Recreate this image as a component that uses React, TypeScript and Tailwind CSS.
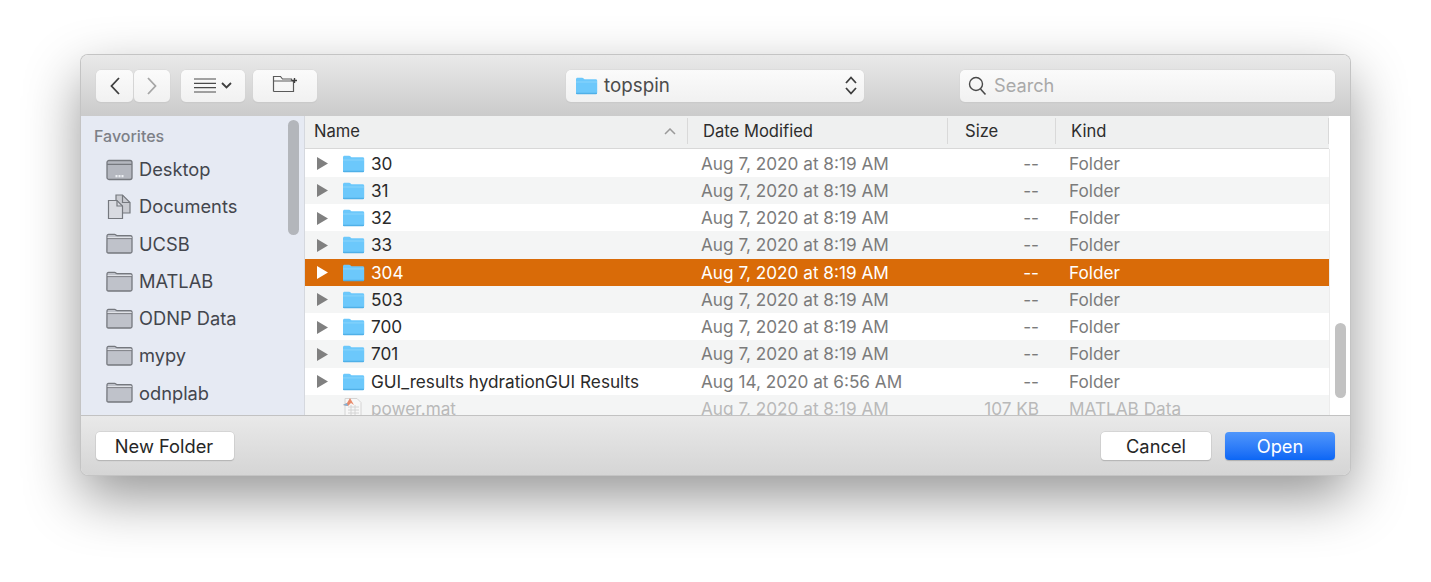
const font = "font-['Inter','Liberation_Sans',sans-serif]";

const rows = [
  { name: "30", date: "Aug 7, 2020 at 8:19 AM" },
  { name: "31", date: "Aug 7, 2020 at 8:19 AM" },
  { name: "32", date: "Aug 7, 2020 at 8:19 AM" },
  { name: "33", date: "Aug 7, 2020 at 8:19 AM" },
  { name: "304", date: "Aug 7, 2020 at 8:19 AM", selected: true },
  { name: "503", date: "Aug 7, 2020 at 8:19 AM" },
  { name: "700", date: "Aug 7, 2020 at 8:19 AM" },
  { name: "701", date: "Aug 7, 2020 at 8:19 AM" },
  { name: "GUI_results hydrationGUI Results", date: "Aug 14, 2020 at 6:56 AM" },
];

const favorites = ["Desktop", "Documents", "UCSB", "MATLAB", "ODNP Data", "mypy", "odnplab"];

function BlueFolder({ className = "" }: { className?: string }) {
  return (
    <svg width="23" height="18" viewBox="0 0 23 18" className={className}>
      <path d="M1 2.500C1 1.400 1.600.8 2.600.8h4.600c1 0 1.400.9 2.300 1.400h11.100c1 0 1.600.6 1.600 1.600v11.600c0 1-.6 1.600-1.600 1.600H2.600c-1 0-1.600-.6-1.600-1.600Z" fill="#6cc8fb" />
      <path d="M1 4.400h21v1H1Z" fill="#8ad4fc" />
      <path d="M1 15.800h21v.4c0 .6-.6 1-1.400 1H2.400c-.8 0-1.400-.4-1.400-1Z" fill="#4fb0e8" />
    </svg>
  );
}

function SideFolder() {
  return (
    <svg width="27" height="22" viewBox="0 0 27 22">
      <path d="M1 3c0-1 .6-1.600 1.500-1.600h6.200c1 0 1.300 1.200 2.300 1.200h13.400c1 0 1.600.6 1.600 1.500v14.400c0 1-.6 1.500-1.600 1.500h-22c-1 0-1.500-.5-1.500-1.500Z" fill="#bfc2ca" stroke="#75787e" strokeWidth="1.300" />
      <path d="M1 5.600h25" stroke="#75787e" strokeWidth="1" />
      <path d="M1.600 4.600h24" stroke="#e4e6ea" strokeWidth="1" />
    </svg>
  );
}

function DesktopIcon() {
  return (
    <svg width="27" height="22" viewBox="0 0 27 22">
      <rect x="1" y="1.500" width="25" height="19" rx="2" fill="#b4b7bf" stroke="#75787e" strokeWidth="1.300" />
      <path d="M1 5.400h25" stroke="#75787e" strokeWidth="1.200" />
      <path d="M9.500 16h2v2.200h-2Zm3 0h2v2.200h-2Zm3 0h2v2.200h-2Z" fill="#eceef2" />
    </svg>
  );
}

function DocumentsIcon() {
  return (
    <svg width="27" height="26" viewBox="0 0 27 26">
      <path d="M10 1h6.500l7.500 7.500V19H10Z" fill="#c9cbd1" stroke="#75787e" strokeWidth="1.200" />
      <path d="M16.500 1v7.500H24" fill="none" stroke="#75787e" strokeWidth="1.200" />
      <path d="M2.500 6.500H11l5.500 5.500v12.500h-14Z" fill="#d9dbe1" stroke="#75787e" strokeWidth="1.200" />
      <path d="M11 6.500V12h5.500" fill="none" stroke="#75787e" strokeWidth="1.200" />
    </svg>
  );
}

function Triangle({ selected }: { selected?: boolean }) {
  return (
    <svg width="11" height="13" viewBox="0 0 11 13">
      <path d="M0 0l11 6.500L0 13Z" fill={selected ? "#ffffff" : "#808080"} />
    </svg>
  );
}

function MatFile() {
  return (
    <svg width="21" height="19" viewBox="0 0 21 19" className="mt-[-2px]">
      <path d="M3 .5h12l4 4v14.500H3Z" fill="#f7f7f7" stroke="#d4d4d4" />
      <path d="M6 9h11M6 12h11M6 15h11M9 7v12M13 7v12" stroke="#d4d4d4" />
      <path d="M1 7l4-2 3-5 4 7-3-2-3 3Z" fill="#e98a6a" />
      <path d="M1 7l4-2 1 3Z" fill="#7db4dc" />
    </svg>
  );
}

function ToolButton({ className, children }: { className: string; children: React.ReactNode }) {
  return (
    <div className={`flex h-[32px] items-center justify-center rounded-[5px] bg-gradient-to-b from-[#fbfbfb] to-[#f1f1f1] shadow-[0_0_0_0.5px_#d6d6d6,0_1px_1px_rgba(0,0,0,0.1)] ${className}`}>
      {children}
    </div>
  );
}

function Row({ row, index }: { row: (typeof rows)[number]; index: number }) {
  const bg = row.selected ? "bg-[#d96b08]" : index % 2 === 0 ? "bg-white" : "bg-[#f4f5f5]";
  const muted = row.selected ? "text-white" : "text-[#7b7b7b]";
  return (
    <div className={`flex h-[27.25px] shrink-0 items-center pt-[1px] text-[17.2px] ${bg}`}>
      <div className="flex w-[37px] pl-[12px]">
        <Triangle selected={row.selected} />
      </div>
      <BlueFolder className="mr-[6px] shrink-0" />
      <span className={`w-[330px] whitespace-nowrap ${row.selected ? "text-white" : "text-[#2a2a2a]"}`}>{row.name}</span>
      <span className={`w-[288px] whitespace-nowrap ${muted}`}>{row.date}</span>
      <span className={`w-[50px] text-right ${muted}`}>--</span>
      <span className={`ml-[30px] ${muted}`}>Folder</span>
    </div>
  );
}

export default function App() {
  return (
    <div className={`h-[582px] w-[1431px] overflow-hidden bg-white pl-[81px] pt-[55px] ${font}`}>
      <div className="flex h-[420px] w-[1269px] flex-col overflow-hidden rounded-[7px] shadow-[0_0_0_1px_#c4c4c4,0_22px_55px_rgba(0,0,0,0.42)]">
        {/* toolbar */}
        <div className="flex h-[61px] shrink-0 items-center bg-gradient-to-b from-[#e9e9e9] to-[#cbcbcb] pl-[15px]">
          <ToolButton className="w-[37px]">
            <svg width="14" height="20" viewBox="0 0 14 20"><path d="M11 2 3.500 10l7.500 8" fill="none" stroke="#3e3e3e" strokeWidth="1.800" /></svg>
          </ToolButton>
          <ToolButton className="ml-[1px] w-[36px]">
            <svg width="14" height="20" viewBox="0 0 14 20"><path d="M3 2l7.500 8L3 18" fill="none" stroke="#a6a6a6" strokeWidth="1.800" /></svg>
          </ToolButton>
          <ToolButton className="ml-[11px] w-[64px] gap-[5px]">
            <svg width="22" height="15" viewBox="0 0 22 15"><path d="M0 1h22M0 5.300h22M0 9.600h22M0 14h22" stroke="#4a4a4a" strokeWidth="1.200" /></svg>
            <svg width="11" height="7" viewBox="0 0 11 7"><path d="M1 1l4.500 4.500L10 1" fill="none" stroke="#3e3e3e" strokeWidth="1.800" /></svg>
          </ToolButton>
          <ToolButton className="ml-[8px] w-[64px]">
            <svg width="26" height="18" viewBox="0 0 26 18" className="mt-[-4px]">
              <path d="M1.500 16.500V1.500h7l2 2.500h9v2M1.500 6h20v10.500h-20" fill="none" stroke="#5a5a5a" strokeWidth="1.200" />
              <path d="M22.500 3v5M20 5.500h5" stroke="#3e3e3e" strokeWidth="1.400" />
            </svg>
          </ToolButton>
          <ToolButton className="ml-[249px] w-[298px] justify-start pl-[9px] pr-[6px]">
            <BlueFolder />
            <span className="ml-[6px] pt-[2px] text-[18.800px] leading-none text-[#4c4c4c]">topspin</span>
            <svg width="14" height="21" viewBox="0 0 14 21" className="ml-auto">
              <path d="M2 8l5-5.500L12 8M2 13l5 5.500L12 13" fill="none" stroke="#3e3e3e" strokeWidth="1.800" />
            </svg>
          </ToolButton>
          <ToolButton className="ml-[96px] w-[375px] justify-start pl-[8px]">
            <svg width="19" height="20" viewBox="0 0 19 20">
              <circle cx="8" cy="8" r="6.500" fill="none" stroke="#4a4a4a" strokeWidth="1.400" />
              <path d="M12.500 13l5 5.500" stroke="#4a4a4a" strokeWidth="1.600" />
            </svg>
            <span className="ml-[7px] text-[18.200px] leading-none text-[#a9a9a9]">Search</span>
          </ToolButton>
        </div>

        {/* body */}
        <div className="relative flex h-[299px] shrink-0 overflow-hidden">
          <div className="relative flex h-full w-[224px] shrink-0 flex-col border-r border-[#d5d8de] bg-[#e6eaf3] pl-[13px] pt-[8px]">
            <div className="text-[16px] font-medium text-[#7d8087]">Favorites</div>
            <div className="mt-[3px] flex flex-col">
              {favorites.map((item) => (
                <div key={item} className="flex h-[37.300px] shrink-0 items-center">
                  <div className="ml-[12px] flex w-[27px] justify-center">
                    {item === "Desktop" ? <DesktopIcon /> : item === "Documents" ? <DocumentsIcon /> : <SideFolder />}
                  </div>
                  <span className="ml-[6px] text-[18.300px] text-[#43464d]">{item}</span>
                </div>
              ))}
            </div>
            <div className="absolute left-[207px] top-[4px] h-[115px] w-[11px] rounded-full bg-[#b3b6bb]" />
          </div>

          <div className="flex min-w-0 flex-1 flex-col bg-white">
            <div className="flex h-[33px] w-[1024px] shrink-0 items-center border-b border-[#d8d8d8] bg-[#eff0f0] pb-[2px] text-[16.600px] text-[#2d2d2d]">
              <div className="relative flex h-[26px] w-[383px] items-center border-r border-[#d9d9d9] pl-[9px]">
                Name
                <svg width="12" height="7" viewBox="0 0 12 7" className="absolute right-[11px] top-[10px]">
                  <path d="M1 6l5-5 5 5" fill="none" stroke="#9a9a9a" strokeWidth="1.500" />
                </svg>
              </div>
              <div className="flex h-[26px] w-[260px] items-center border-r border-[#d9d9d9] pl-[15px]">Date Modified</div>
              <div className="flex h-[26px] w-[108px] items-center border-r border-[#d9d9d9] pl-[17px]">Size</div>
              <div className="flex h-[26px] w-[273px] items-center border-r border-[#d9d9d9] pl-[15px]">Kind</div>
            </div>
            <div className="flex h-[266px] w-[1025px] flex-col overflow-hidden pt-[0.500px]">
              {rows.map((row, i) => (
                <Row key={row.name} row={row} index={i} />
              ))}
              <div className="flex h-[27.250px] shrink-0 items-center bg-[#f4f5f5] pt-[1px] text-[17.200px] text-[#b9b9b9]">
                <div className="ml-[37px] flex w-[29px]"><MatFile /></div>
                <span className="w-[330px] whitespace-nowrap">power.mat</span>
                <span className="w-[277px] whitespace-nowrap">Aug 7, 2020 at 8:19 AM</span>
                <span className="w-[61px] whitespace-nowrap text-right">107 KB</span>
                <span className="ml-[30px] whitespace-nowrap">MATLAB Data</span>
              </div>
            </div>
          </div>
          <div className="absolute left-[1254px] top-[207px] h-[75px] w-[11px] rounded-full bg-[#c2c2c2]" />
          <div className="absolute bottom-0 left-[1248px] top-[33px] w-[1px] bg-[#ececec]" />
        </div>

        {/* footer */}
        <div className="flex h-[60px] shrink-0 items-center border-t border-[#c2c2c2] bg-gradient-to-b from-[#e9e9e9] to-[#d5d5d5] px-[15px] pt-[1px] text-[18.300px] text-[#262626]">
          <div className="flex h-[28px] w-[138px] items-center justify-center rounded-[4px] bg-white pr-[2px] pt-[1px] shadow-[0_0_0_0.5px_#c6c6c6,0_1px_1px_rgba(0,0,0,0.25)]">New Folder</div>
          <div className="ml-auto flex h-[28px] w-[110px] items-center justify-center rounded-[4px] bg-white pt-[1px] shadow-[0_0_0_0.5px_#c6c6c6,0_1px_1px_rgba(0,0,0,0.25)]">Cancel</div>
          <div className="ml-[14px] flex h-[28px] w-[110px] items-center justify-center rounded-[4px] bg-gradient-to-b from-[#4f96fb] to-[#0a66f5] pt-[1px] text-white shadow-[0_1px_1px_rgba(0,0,0,0.2)]">Open</div>
        </div>
      </div>
    </div>
  );
}
